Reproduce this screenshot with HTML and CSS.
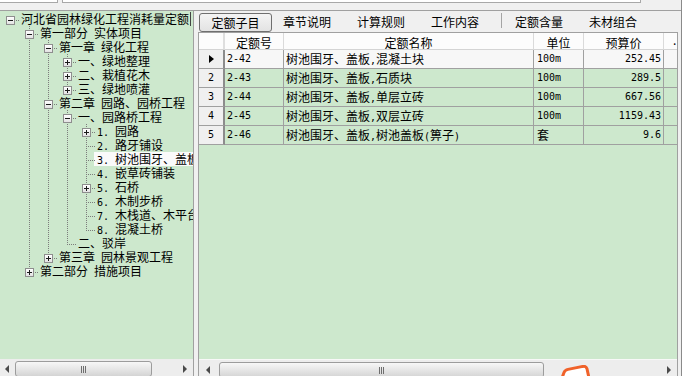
FILE: index.html
```html
<!DOCTYPE html>
<html lang="zh-CN">
<head>
<meta charset="utf-8">
<title>定额</title>
<link rel="stylesheet" href="styles.css">
</head>
<body>
<div class="screen">
  <div class="page">
    <div class="topstrip"><span class="tb tb1"></span><span class="tb tb2"></span></div>
    <div class="main">
      <aside class="left">
        <div class="tree">
          <div class="row"><span class="g h"><i class="box"></i></span><span class="lbl root">河北省园林绿化工程消耗量定额</span></div>
          <div class="row"><span class="g"></span><span class="g t"><i class="box"></i></span><span class="lbl">第一部分&ensp;实体项目</span></div>
          <div class="row"><span class="g"></span><span class="g p"></span><span class="g t"><i class="box"></i></span><span class="lbl">第一章&ensp;绿化工程</span></div>
          <div class="row"><span class="g"></span><span class="g p"></span><span class="g p"></span><span class="g t"><i class="box plus"></i></span><span class="lbl">一、绿地整理</span></div>
          <div class="row"><span class="g"></span><span class="g p"></span><span class="g p"></span><span class="g t"><i class="box plus"></i></span><span class="lbl">二、栽植花木</span></div>
          <div class="row"><span class="g"></span><span class="g p"></span><span class="g p"></span><span class="g e"><i class="box plus"></i></span><span class="lbl">三、绿地喷灌</span></div>
          <div class="row"><span class="g"></span><span class="g p"></span><span class="g t"><i class="box"></i></span><span class="lbl">第二章&ensp;园路、园桥工程</span></div>
          <div class="row"><span class="g"></span><span class="g p"></span><span class="g p"></span><span class="g t"><i class="box"></i></span><span class="lbl">一、园路桥工程</span></div>
          <div class="row"><span class="g"></span><span class="g p"></span><span class="g p"></span><span class="g p"></span><span class="g t"><i class="box plus"></i></span><span class="lbl"><span class="num">1.</span>园路</span></div>
          <div class="row"><span class="g"></span><span class="g p"></span><span class="g p"></span><span class="g p"></span><span class="g t"></span><span class="lbl"><span class="num">2.</span>路牙铺设</span></div>
          <div class="row"><span class="g"></span><span class="g p"></span><span class="g p"></span><span class="g p"></span><span class="g t"></span><span class="lbl sel"><span class="num">3.</span>树池围牙、盖板</span></div>
          <div class="row"><span class="g"></span><span class="g p"></span><span class="g p"></span><span class="g p"></span><span class="g t"></span><span class="lbl"><span class="num">4.</span>嵌草砖铺装</span></div>
          <div class="row"><span class="g"></span><span class="g p"></span><span class="g p"></span><span class="g p"></span><span class="g t"><i class="box plus"></i></span><span class="lbl"><span class="num">5.</span>石桥</span></div>
          <div class="row"><span class="g"></span><span class="g p"></span><span class="g p"></span><span class="g p"></span><span class="g t"></span><span class="lbl"><span class="num">6.</span>木制步桥</span></div>
          <div class="row"><span class="g"></span><span class="g p"></span><span class="g p"></span><span class="g p"></span><span class="g t"></span><span class="lbl"><span class="num">7.</span>木栈道、木平台</span></div>
          <div class="row"><span class="g"></span><span class="g p"></span><span class="g p"></span><span class="g p"></span><span class="g e"></span><span class="lbl"><span class="num">8.</span>混凝土桥</span></div>
          <div class="row"><span class="g"></span><span class="g p"></span><span class="g p"></span><span class="g e"></span><span class="lbl">二、驳岸</span></div>
          <div class="row"><span class="g"></span><span class="g p"></span><span class="g e"><i class="box plus"></i></span><span class="lbl">第三章&ensp;园林景观工程</span></div>
          <div class="row"><span class="g"></span><span class="g e"><i class="box plus"></i></span><span class="lbl">第二部分&ensp;措施项目</span></div>
        </div>
        <div class="hscroll hs-left">
          <span class="arrow"><i class="tri-l"></i></span>
          <span class="thumb thumb-left"><i class="grip"></i></span>
          <span class="arrow arrow-end"><i class="tri-r"></i></span>
        </div>
      </aside>
      <section class="right">
        <nav class="tabs">
          <span class="tab active">定额子目</span>
          <span class="tab">章节说明</span>
          <span class="tab">计算规则</span>
          <span class="tab">工作内容</span>
          <span class="tabsep"></span>
          <span class="tab">定额含量</span>
          <span class="tab">未材组合</span>
        </nav>
        <div class="grid">
          <div class="grow head">
            <span class="ind"></span>
            <span class="c">定额号</span>
            <span class="c">定额名称</span>
            <span class="c">单位</span>
            <span class="c">预算价</span>
            <span class="x">.</span>
          </div>
          <div class="grow cur">
            <span class="ind"><i class="ptr"></i></span>
            <span class="code">2-42</span>
            <span class="name">树池围牙、盖板<span class="asc">,</span>混凝土块</span>
            <span class="unit">100m</span>
            <span class="price">252.45</span>
            <span class="x"></span>
          </div>
          <div class="grow">
            <span class="ind">2</span>
            <span class="code">2-43</span>
            <span class="name">树池围牙、盖板<span class="asc">,</span>石质块</span>
            <span class="unit">100m</span>
            <span class="price">289.5</span>
            <span class="x"></span>
          </div>
          <div class="grow">
            <span class="ind">3</span>
            <span class="code">2-44</span>
            <span class="name">树池围牙、盖板<span class="asc">,</span>单层立砖</span>
            <span class="unit">100m</span>
            <span class="price">667.56</span>
            <span class="x"></span>
          </div>
          <div class="grow">
            <span class="ind">4</span>
            <span class="code">2-45</span>
            <span class="name">树池围牙、盖板<span class="asc">,</span>双层立砖</span>
            <span class="unit">100m</span>
            <span class="price">1159.43</span>
            <span class="x"></span>
          </div>
          <div class="grow">
            <span class="ind">5</span>
            <span class="code">2-46</span>
            <span class="name">树池围牙、盖板<span class="asc">,</span>树池盖板<span class="asc">(</span>箅子<span class="asc">)</span></span>
            <span class="unit cjk">套</span>
            <span class="price">9.6</span>
            <span class="x"></span>
          </div>
          <div class="fill"></div>
          <div class="hscroll hs-right">
            <span class="arrow arrow-wide"><i class="tri-l"></i></span>
            <span class="thumb thumb-right"><i class="grip"></i></span>
            <span class="arrow arrow-wide arrow-end"><i class="tri-r"></i></span>
          </div>
        </div>
      </section>
    </div>
  </div>
  <div class="edge"></div>
  <svg class="mark" width="30" height="12" viewBox="0 0 30 12"><path d="M2 13 L4 7.5 Q5 5 8 4.4 L23 1.4 Q26 0.9 27 3.8 L29 13" fill="#ffffff" stroke="#f0622a" stroke-width="3"/></svg>
</div>
</body>
</html>
```

FILE: styles.css
```css
* { box-sizing: border-box; }

html, body {
  margin: 0;
  padding: 0;
}

body {
  width: 686px;
  height: 376px;
  overflow: hidden;
  background: #f0f0f0;
  font-family: "Noto Sans CJK SC", "Noto Sans", sans-serif;
  font-size: 12px;
  color: #000;
}

.screen {
  position: relative;
  display: flex;
  width: 686px;
  height: 376px;
}

.page {
  width: 681px;
  display: flex;
  flex-direction: column;
}

.edge {
  width: 5px;
  border-left: 1px solid #8a8a8a;
  background: #ffffff;
}

/* top strip */
.topstrip {
  height: 10px;
  display: flex;
  background: #f0f0f0;
}
.tb {
  height: 3px;
  background: #ffffff;
  border-bottom: 1px solid #a8a8a8;
}
.tb1 {
  width: 58px;
  border-right: 1px solid #a8a8a8;
}
.tb2 {
  margin-left: 4px;
  width: 579px;
  border-left: 1px solid #a8a8a8;
  border-right: 1px solid #a8a8a8;
}

.main {
  flex: 1;
  display: flex;
  border-top: 1px solid #a0a0a0;
  min-height: 0;
}

/* left tree panel */
.left {
  width: 194px;
  border-right: 1px solid #a0a0a0;
  background: #cde8cd;
  display: flex;
  flex-direction: column;
  overflow: hidden;
}

.tree {
  flex: 1;
  padding-top: 1px;
  overflow: hidden;
}

.row {
  display: flex;
  height: 14px;
  line-height: 14px;
  padding-left: 1px;
  white-space: nowrap;
}

.g {
  position: relative;
  flex: none;
  width: 19px;
  height: 14px;
}
.g::before, .g::after {
  content: "";
  position: absolute;
}
.p::before, .t::before {
  left: 9px;
  top: 0;
  bottom: 0;
  width: 1px;
  background: repeating-linear-gradient(to bottom, #7c7c7c 0 1px, transparent 1px 2px);
}
.e::before {
  left: 9px;
  top: 0;
  height: 9px;
  width: 1px;
  background: repeating-linear-gradient(to bottom, #7c7c7c 0 1px, transparent 1px 2px);
}
.t::after, .e::after, .h::after {
  left: 10px;
  right: 0;
  top: 8px;
  height: 1px;
  background: repeating-linear-gradient(to right, transparent 0 1px, #7c7c7c 1px 2px);
}

.box {
  position: absolute;
  z-index: 1;
  left: 5px;
  top: 4px;
  width: 9px;
  height: 9px;
  border: 1px solid #8e8e8e;
  background: linear-gradient(#ffffff, #e2e2e2);
}
.box::before {
  content: "";
  position: absolute;
  left: 1px;
  top: 3px;
  width: 5px;
  height: 1px;
  background: #1a1a1a;
}
.box.plus::after {
  content: "";
  position: absolute;
  left: 3px;
  top: 1px;
  width: 1px;
  height: 5px;
  background: #1a1a1a;
}

.lbl {
  padding: 0 2px 0 1px;
}
.lbl.root {
  border-right: 1px solid #444;
  padding-right: 1px;
}
.lbl.sel {
  background: #fafafa;
  margin-left: -2px;
  padding-left: 3px;
}
.num {
  display: inline-block;
  width: 18px;
  font-family: "DejaVu Sans Mono", "Liberation Mono", monospace;
  font-size: 10px;
}

/* scrollbars */
.hscroll {
  height: 17px;
  display: flex;
  align-items: flex-start;
  padding-top: 2px;
  background: #ededed;
  flex: none;
}
.arrow {
  width: 13px;
  height: 15px;
  display: flex;
  align-items: center;
  justify-content: center;
  flex: none;
}
.arrow-wide { width: 17px; }
.arrow-end { margin-left: auto; width: 17px; }
.tri-l {
  width: 0;
  height: 0;
  border-top: 4px solid transparent;
  border-bottom: 4px solid transparent;
  border-right: 4px solid #4a4a4a;
}
.tri-r {
  width: 0;
  height: 0;
  border-top: 4px solid transparent;
  border-bottom: 4px solid transparent;
  border-left: 4px solid #4a4a4a;
}
.thumb {
  height: 16px;
  border: 1px solid #9c9c9c;
  border-radius: 3px;
  background: linear-gradient(#f7f7f7, #e6e6e6 50%, #d4d4d4);
  display: flex;
  align-items: center;
  justify-content: center;
  flex: none;
}
.thumb-left {
  margin-left: 2px;
  width: 137px;
}
.thumb-right {
  margin-left: 3px;
  width: 325px;
}
.grip {
  width: 5px;
  height: 7px;
  background: repeating-linear-gradient(to right, #6e6e6e 0 1px, transparent 1px 2px);
}

/* right panel */
.right {
  width: 480px;
  margin-left: 4px;
  display: flex;
  flex-direction: column;
}

.tabs {
  height: 21px;
  display: flex;
  align-items: flex-start;
  flex: none;
}
.tab {
  margin-top: 2px;
  height: 19px;
  line-height: 18px;
  padding: 0 13px;
  white-space: nowrap;
}
.tab.active {
  width: 73px;
  padding: 0;
  margin-left: 1px;
  text-align: center;
  border: 1px solid #6f6f6f;
  border-radius: 3px;
  background: linear-gradient(#f4f4f4, #e3e3e3);
}
.tab.active + .tab {
  padding-left: 11px;
}
.tabsep {
  width: 1px;
  height: 15px;
  margin: 2px 0 0 9px;
  background: #a4a4a4;
}

.grid {
  flex: 1;
  display: flex;
  flex-direction: column;
  border: 1px solid #a0a0a0;
  border-bottom: none;
  background: #cde8cd;
  min-height: 0;
}

.grow {
  display: grid;
  grid-template-columns: 26px 59px 250px 50px 80px 13px;
  height: 19px;
  line-height: 18px;
  background: #cde8cd;
  flex: none;
}
.grow > span {
  border-right: 1px solid #a0a0a0;
  border-bottom: 1px solid #a0a0a0;
  overflow: hidden;
  white-space: nowrap;
}
.grow > .x {
  border-right: none;
}
.grow > .ind {
  border-right: 2px solid #8c8c8c;
  background: #f0f0f0;
  text-align: center;
  font-family: "DejaVu Sans Mono", "Liberation Mono", monospace;
  font-size: 10px;
  display: flex;
  align-items: center;
  justify-content: center;
}

.grow.head {
  height: 17px;
  line-height: 17px;
  background: #fcfcfc;
}
.grow.head > span {
  border-right-color: #dadada;
  border-bottom-color: #d4d4d4;
  text-align: center;
  padding-top: 1px;
}
.grow.head > .ind {
  border-right: 2px solid #dedede;
  background: #fcfcfc;
}
.grow.head > .x {
  text-align: left;
  padding-left: 9px;
  line-height: 12px;
}

.grow.cur {
  background: #f7f7f7;
}

.ptr {
  width: 0;
  height: 0;
  border-top: 4px solid transparent;
  border-bottom: 4px solid transparent;
  border-left: 5px solid #000;
}

.code, .unit, .price {
  font-family: "DejaVu Sans Mono", "Liberation Mono", monospace;
  font-size: 10px;
}
.code { padding-left: 2px; }
.name { padding-left: 2px; }
.unit { padding-left: 3px; }
.unit.cjk {
  font-family: "Noto Sans CJK SC", sans-serif;
  font-size: 12px;
}
.price {
  text-align: right;
  padding-right: 2px;
}
.asc {
  font-family: "DejaVu Sans Mono", "Liberation Mono", monospace;
  font-size: 10px;
}

.fill {
  flex: 1;
  background: #cde8cd;
}

.hs-right {
  border-top: 1px solid #f8f8f8;
}

.mark {
  position: absolute;
  left: 560px;
  top: 365px;
}
```
